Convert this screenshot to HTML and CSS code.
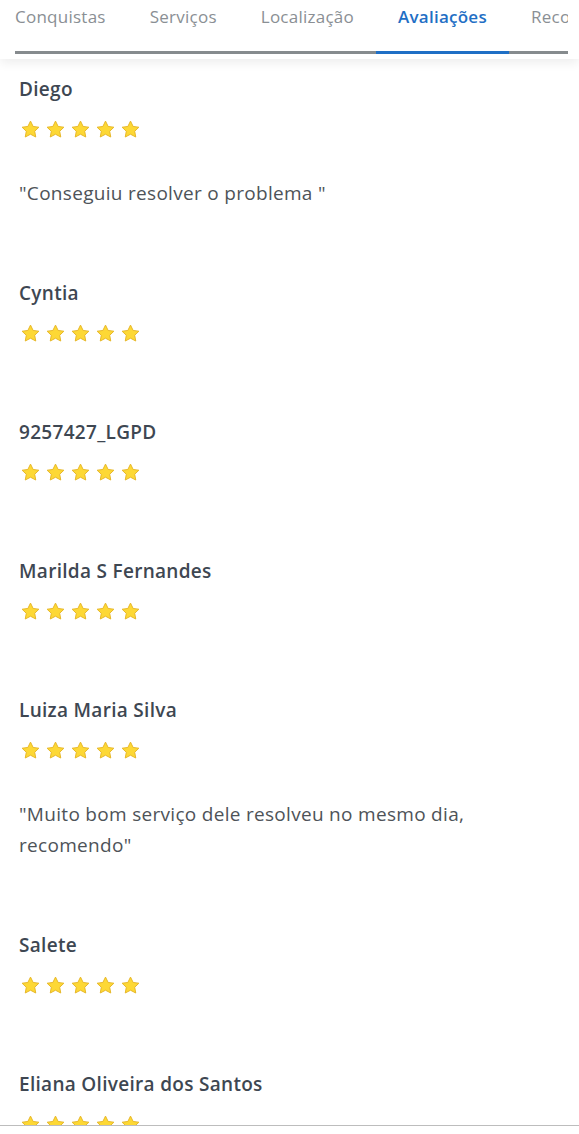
FILE: index.html
```html
<!DOCTYPE html>
<html lang="pt-BR">
<head>
<meta charset="utf-8">
<title>Avaliações</title>
<link rel="stylesheet" href="styles.css">
</head>
<body>
<div class="page">
  <header class="header">
    <nav class="tabs">
      <div class="tab-strip">
        <span class="tab">Conquistas</span>
        <span class="tab">Serviços</span>
        <span class="tab">Localização</span>
        <span class="tab active">Avaliações</span>
        <span class="tab">Recomendações</span>
      </div>
    </nav>
  </header>
  <main class="reviews">
    <article class="review">
      <h3 class="name">Diego</h3>
      <div class="stars"><svg class="star" viewBox="0 0 24 24"><path d="M12 2.4l3 6.1 6.6.9-4.8 4.6 1.2 6.6L12 17.4l-6 3.2 1.2-6.6-4.8-4.6 6.6-.9z"/></svg><svg class="star" viewBox="0 0 24 24"><path d="M12 2.4l3 6.1 6.6.9-4.8 4.6 1.2 6.6L12 17.4l-6 3.2 1.2-6.6-4.8-4.6 6.6-.9z"/></svg><svg class="star" viewBox="0 0 24 24"><path d="M12 2.4l3 6.1 6.6.9-4.8 4.6 1.2 6.6L12 17.4l-6 3.2 1.2-6.6-4.8-4.6 6.6-.9z"/></svg><svg class="star" viewBox="0 0 24 24"><path d="M12 2.4l3 6.1 6.6.9-4.8 4.6 1.2 6.6L12 17.4l-6 3.2 1.2-6.6-4.8-4.6 6.6-.9z"/></svg><svg class="star" viewBox="0 0 24 24"><path d="M12 2.4l3 6.1 6.6.9-4.8 4.6 1.2 6.6L12 17.4l-6 3.2 1.2-6.6-4.8-4.6 6.6-.9z"/></svg></div>
      <p class="quote">"Conseguiu resolver o problema "</p>
    </article>
    <article class="review">
      <h3 class="name">Cyntia</h3>
      <div class="stars"><svg class="star" viewBox="0 0 24 24"><path d="M12 2.4l3 6.1 6.6.9-4.8 4.6 1.2 6.6L12 17.4l-6 3.2 1.2-6.6-4.8-4.6 6.6-.9z"/></svg><svg class="star" viewBox="0 0 24 24"><path d="M12 2.4l3 6.1 6.6.9-4.8 4.6 1.2 6.6L12 17.4l-6 3.2 1.2-6.6-4.8-4.6 6.6-.9z"/></svg><svg class="star" viewBox="0 0 24 24"><path d="M12 2.4l3 6.1 6.6.9-4.8 4.6 1.2 6.6L12 17.4l-6 3.2 1.2-6.6-4.8-4.6 6.6-.9z"/></svg><svg class="star" viewBox="0 0 24 24"><path d="M12 2.4l3 6.1 6.6.9-4.8 4.6 1.2 6.6L12 17.4l-6 3.2 1.2-6.6-4.8-4.6 6.6-.9z"/></svg><svg class="star" viewBox="0 0 24 24"><path d="M12 2.4l3 6.1 6.6.9-4.8 4.6 1.2 6.6L12 17.4l-6 3.2 1.2-6.6-4.8-4.6 6.6-.9z"/></svg></div>
    </article>
    <article class="review">
      <h3 class="name">9257427_LGPD</h3>
      <div class="stars"><svg class="star" viewBox="0 0 24 24"><path d="M12 2.4l3 6.1 6.6.9-4.8 4.6 1.2 6.6L12 17.4l-6 3.2 1.2-6.6-4.8-4.6 6.6-.9z"/></svg><svg class="star" viewBox="0 0 24 24"><path d="M12 2.4l3 6.1 6.6.9-4.8 4.6 1.2 6.6L12 17.4l-6 3.2 1.2-6.6-4.8-4.6 6.6-.9z"/></svg><svg class="star" viewBox="0 0 24 24"><path d="M12 2.4l3 6.1 6.6.9-4.8 4.6 1.2 6.6L12 17.4l-6 3.2 1.2-6.6-4.8-4.6 6.6-.9z"/></svg><svg class="star" viewBox="0 0 24 24"><path d="M12 2.4l3 6.1 6.6.9-4.8 4.6 1.2 6.6L12 17.4l-6 3.2 1.2-6.6-4.8-4.6 6.6-.9z"/></svg><svg class="star" viewBox="0 0 24 24"><path d="M12 2.4l3 6.1 6.6.9-4.8 4.6 1.2 6.6L12 17.4l-6 3.2 1.2-6.6-4.8-4.6 6.6-.9z"/></svg></div>
    </article>
    <article class="review">
      <h3 class="name">Marilda S Fernandes</h3>
      <div class="stars"><svg class="star" viewBox="0 0 24 24"><path d="M12 2.4l3 6.1 6.6.9-4.8 4.6 1.2 6.6L12 17.4l-6 3.2 1.2-6.6-4.8-4.6 6.6-.9z"/></svg><svg class="star" viewBox="0 0 24 24"><path d="M12 2.4l3 6.1 6.6.9-4.8 4.6 1.2 6.6L12 17.4l-6 3.2 1.2-6.6-4.8-4.6 6.6-.9z"/></svg><svg class="star" viewBox="0 0 24 24"><path d="M12 2.4l3 6.1 6.6.9-4.8 4.6 1.2 6.6L12 17.4l-6 3.2 1.2-6.6-4.8-4.6 6.6-.9z"/></svg><svg class="star" viewBox="0 0 24 24"><path d="M12 2.4l3 6.1 6.6.9-4.8 4.6 1.2 6.6L12 17.4l-6 3.2 1.2-6.6-4.8-4.6 6.6-.9z"/></svg><svg class="star" viewBox="0 0 24 24"><path d="M12 2.4l3 6.1 6.6.9-4.8 4.6 1.2 6.6L12 17.4l-6 3.2 1.2-6.6-4.8-4.6 6.6-.9z"/></svg></div>
    </article>
    <article class="review">
      <h3 class="name">Luiza Maria Silva</h3>
      <div class="stars"><svg class="star" viewBox="0 0 24 24"><path d="M12 2.4l3 6.1 6.6.9-4.8 4.6 1.2 6.6L12 17.4l-6 3.2 1.2-6.6-4.8-4.6 6.6-.9z"/></svg><svg class="star" viewBox="0 0 24 24"><path d="M12 2.4l3 6.1 6.6.9-4.8 4.6 1.2 6.6L12 17.4l-6 3.2 1.2-6.6-4.8-4.6 6.6-.9z"/></svg><svg class="star" viewBox="0 0 24 24"><path d="M12 2.4l3 6.1 6.6.9-4.8 4.6 1.2 6.6L12 17.4l-6 3.2 1.2-6.6-4.8-4.6 6.6-.9z"/></svg><svg class="star" viewBox="0 0 24 24"><path d="M12 2.4l3 6.1 6.6.9-4.8 4.6 1.2 6.6L12 17.4l-6 3.2 1.2-6.6-4.8-4.6 6.6-.9z"/></svg><svg class="star" viewBox="0 0 24 24"><path d="M12 2.4l3 6.1 6.6.9-4.8 4.6 1.2 6.6L12 17.4l-6 3.2 1.2-6.6-4.8-4.6 6.6-.9z"/></svg></div>
      <p class="quote">"Muito bom serviço dele resolveu no mesmo dia, recomendo"</p>
    </article>
    <article class="review">
      <h3 class="name">Salete</h3>
      <div class="stars"><svg class="star" viewBox="0 0 24 24"><path d="M12 2.4l3 6.1 6.6.9-4.8 4.6 1.2 6.6L12 17.4l-6 3.2 1.2-6.6-4.8-4.6 6.6-.9z"/></svg><svg class="star" viewBox="0 0 24 24"><path d="M12 2.4l3 6.1 6.6.9-4.8 4.6 1.2 6.6L12 17.4l-6 3.2 1.2-6.6-4.8-4.6 6.6-.9z"/></svg><svg class="star" viewBox="0 0 24 24"><path d="M12 2.4l3 6.1 6.6.9-4.8 4.6 1.2 6.6L12 17.4l-6 3.2 1.2-6.6-4.8-4.6 6.6-.9z"/></svg><svg class="star" viewBox="0 0 24 24"><path d="M12 2.4l3 6.1 6.6.9-4.8 4.6 1.2 6.6L12 17.4l-6 3.2 1.2-6.6-4.8-4.6 6.6-.9z"/></svg><svg class="star" viewBox="0 0 24 24"><path d="M12 2.4l3 6.1 6.6.9-4.8 4.6 1.2 6.6L12 17.4l-6 3.2 1.2-6.6-4.8-4.6 6.6-.9z"/></svg></div>
    </article>
    <article class="review">
      <h3 class="name">Eliana Oliveira dos Santos</h3>
      <div class="stars"><svg class="star" viewBox="0 0 24 24"><path d="M12 2.4l3 6.1 6.6.9-4.8 4.6 1.2 6.6L12 17.4l-6 3.2 1.2-6.6-4.8-4.6 6.6-.9z"/></svg><svg class="star" viewBox="0 0 24 24"><path d="M12 2.4l3 6.1 6.6.9-4.8 4.6 1.2 6.6L12 17.4l-6 3.2 1.2-6.6-4.8-4.6 6.6-.9z"/></svg><svg class="star" viewBox="0 0 24 24"><path d="M12 2.4l3 6.1 6.6.9-4.8 4.6 1.2 6.6L12 17.4l-6 3.2 1.2-6.6-4.8-4.6 6.6-.9z"/></svg><svg class="star" viewBox="0 0 24 24"><path d="M12 2.4l3 6.1 6.6.9-4.8 4.6 1.2 6.6L12 17.4l-6 3.2 1.2-6.6-4.8-4.6 6.6-.9z"/></svg><svg class="star" viewBox="0 0 24 24"><path d="M12 2.4l3 6.1 6.6.9-4.8 4.6 1.2 6.6L12 17.4l-6 3.2 1.2-6.6-4.8-4.6 6.6-.9z"/></svg></div>
    </article>
  </main>
  <footer class="footer"></footer>
</div>
</body>
</html>
```

FILE: styles.css
```css
* { box-sizing: border-box; }
html, body { margin: 0; padding: 0; background: #fff; }
body {
  font-family: "Open Sans", "Noto Sans", "Liberation Sans", sans-serif;
  color: #3e4752;
}
.page {
  width: 579px;
  height: 1134px;
  display: flex;
  flex-direction: column;
  overflow: hidden;
}
.header {
  height: 59px;
  flex: none;
  background: #fff;
  box-shadow: 0 4px 10px rgba(0, 0, 0, 0.07);
  position: relative;
  z-index: 1;
  padding: 0 11px 0 15px;
}
.tabs {
  height: 54px;
  overflow: hidden;
  box-shadow: inset 0 -3px 0 #868b8e;
}
.tab-strip {
  display: flex;
  margin-left: -22px;
  white-space: nowrap;
}
.tab {
  flex: none;
  padding: 5px 22px 0;
  height: 54px;
  font-size: 17px;
  line-height: 24px;
  letter-spacing: 0.25px;
  color: #8a8f94;
  border-bottom: 3px solid transparent;
}
.tab.active {
  color: #1f6fc5;
  font-weight: 600;
  border-bottom-color: #1f6fc5;
}
.reviews {
  flex: 1;
  overflow: hidden;
  padding: 18px 19px 0;
}
.review {
  padding-bottom: 72px;
}
.name {
  margin: 0;
  font-size: 19px;
  line-height: 24px;
  font-weight: 600;
  letter-spacing: 0.3px;
  color: #3e4752;
}
.stars {
  margin-top: 19px;
  height: 24px;
  display: flex;
  gap: 4px;
  margin-left: 1px;
}
.star {
  width: 21px;
  height: 21px;
  margin-top: -1px;
  fill: #fdd835;
  stroke: #e6b628;
  stroke-width: 1.1;
  stroke-linejoin: round;
}
.quote {
  margin: 34px 0 0;
  font-size: 19px;
  line-height: 31px;
  letter-spacing: 0.3px;
  color: #4e5358;
  max-width: 490px;
}
.footer {
  flex: none;
  height: 9px;
  border-top: 1px solid #bdbdbd;
  background: #fff;
}
```
